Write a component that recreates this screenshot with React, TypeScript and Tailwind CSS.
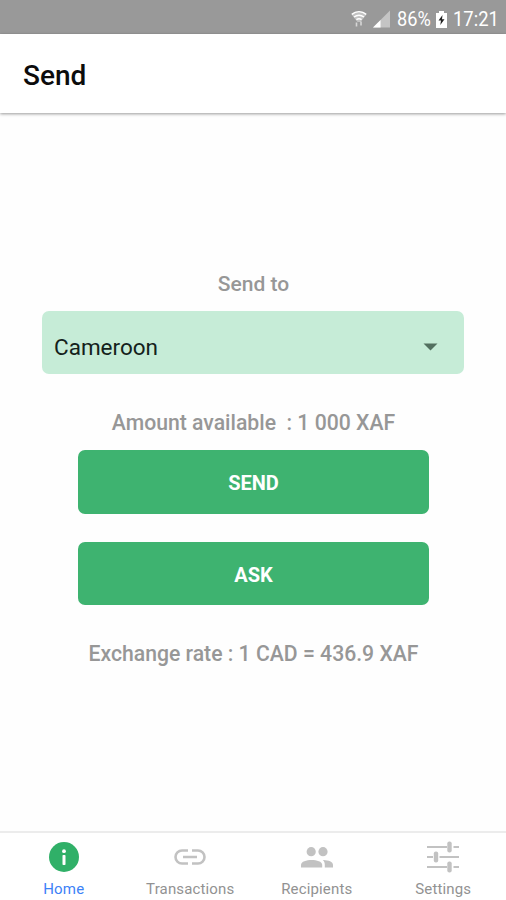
function StatusBar() {
  return (
    <div className="flex h-[34px] items-center justify-end bg-[#999999] pr-[7px] pt-1 text-white">
      <svg width="16" height="18" viewBox="0 0 16 18" fill="none" className="mr-[6px]">
        <path d="M0.5 4.500C4.500 0.200 11.500 0.200 15.500 4.500L9.500 12h-3Z" fill="#fff" fillOpacity="0.4" />
        <path
          d="M0.800 4.400C5 0.700 11 0.700 15.200 4.400M3 7C6 4.800 10 4.800 13 7M5.400 9.600C7 8.500 9 8.500 10.600 9.600"
          stroke="#fff"
          strokeWidth="1.4"
        />
        <path d="M5.500 12.500v4M10 11.500v4" stroke="#fff" strokeOpacity="0.6" strokeWidth="1.6" />
      </svg>
      <svg width="17" height="18" viewBox="0 0 18 18" className="mr-[7px]">
        <path d="M18 0V18H0Z" fill="#c4c4c4" />
        <path d="M8 10V18H0Z" fill="#fff" />
      </svg>
      <span className="w-[35px] whitespace-nowrap text-[20px] leading-none">
        <span className="inline-block origin-left scale-x-[0.91]">86%</span>
      </span>
      <svg width="11" height="17" viewBox="0 0 11 17" className="ml-1 mr-[6px]">
        <path d="M3 0h5v2h3v15H0V2h3Z" fill="#fff" />
        <path d="M6.500 4L2.500 9.500H5L4.300 14L8.500 8.200H6Z" fill="#222" />
      </svg>
      <span className="w-[46px] whitespace-nowrap text-[20px] leading-none">
        <span className="inline-block origin-left scale-x-[0.92]">17:21</span>
      </span>
    </div>
  );
}

function InfoIcon() {
  return (
    <svg width="30" height="30" viewBox="0 0 30 30">
      <circle cx="15" cy="15" r="15" fill="#30b068" />
      <circle cx="15" cy="9.200" r="1.900" fill="#fff" />
      <rect x="13.500" y="13" width="3" height="10" rx="0.800" fill="#fff" />
    </svg>
  );
}

function LinkIcon() {
  return (
    <svg width="32" height="16" viewBox="0 0 32 16" fill="none" stroke="currentColor" strokeWidth="2.600">
      <path d="M14 1.500H8a6.500 6.500 0 0 0 0 13h6M18 1.500h6a6.500 6.500 0 0 1 0 13h-6M9 8h14" />
    </svg>
  );
}

function PeopleIcon() {
  return (
    <svg width="32" height="21" viewBox="0 0 32 21" fill="currentColor">
      <circle cx="10.200" cy="4.700" r="4.600" />
      <circle cx="22" cy="4.700" r="4.600" />
      <path d="M0 20.500v-2.700C0 14.500 5.500 13 10.600 13s10.600 1.500 10.600 4.800v2.700z" />
      <path d="M22.600 13C27.500 13.200 32 14.700 32 17.800v2.700h-8.200v-2.700c0-1.900-.5-3.400-2-4.800z" />
    </svg>
  );
}

function OptionsIcon() {
  return (
    <svg width="32" height="32" viewBox="0 0 32 32" fill="currentColor">
      <path d="M0 5h20v2H0zM26.500 5H32v2h-5.500zM0 15h6v2H0zM12.500 15H32v2H12.500zM0 25h20v2H0zM26.500 25H32v2h-5.500z" />
      <rect x="20.300" y="0.500" width="4.400" height="11" rx="2" />
      <rect x="6.800" y="10.500" width="4.400" height="11" rx="2" />
      <rect x="20.300" y="20.500" width="4.400" height="11" rx="2" />
    </svg>
  );
}

function Tab({ icon, label, active }: any) {
  return (
    <button className="flex flex-1 flex-col items-center pl-px">
      <span className="flex h-[48px] items-center text-[#c2c2c2]">{icon}</span>
      <span
        className={
          active
            ? "text-[15px] leading-4 tracking-[0.15px] text-[#3c82f7]"
            : "text-[15px] leading-4 tracking-[0.15px] text-[#929292]"
        }
      >
        {label}
      </span>
    </button>
  );
}

export default function App() {
  return (
    <div className="flex h-[900px] w-[506px] flex-col overflow-hidden bg-[#fefefe] font-['Roboto',sans-serif]">
      <StatusBar />
      <header className="z-10 flex h-[79px] shrink-0 items-center bg-white pl-[23px] pt-1 shadow-[0_1px_3px_rgba(0,0,0,0.4)]">
        <h1 className="text-[28px] font-medium text-[#0c0c0c]">Send</h1>
      </header>

      <main className="flex flex-1 flex-col items-center pl-px pt-[157px] font-medium text-[#979797]">
        <p className="h-[41px] text-[21px] leading-[28px]">Send to</p>
        <button className="mr-px flex h-[63px] w-[422px] items-center justify-between rounded-[7px] bg-[#c6ecd7] pl-[12px] pr-[26px] pt-2">
          <span className="pt-0.5 text-[22.500px] font-normal text-[#14221b]">Cameroon</span>
          <svg width="15" height="8" viewBox="0 0 15 8" fill="#52705f">
            <path d="M0.500 0.500h14L7.500 7.500z" />
          </svg>
        </button>
        <p className="mt-[35px] h-[41px] whitespace-pre text-[21.200px] leading-[28px]">
          {"Amount available  : 1 000 XAF"}
        </p>
        <button className="h-[64px] w-[351px] rounded-[7px] bg-[#3eb370] pt-[2px] text-[20px] font-bold text-white">
          SEND
        </button>
        <button className="mt-[28px] h-[63px] w-[351px] rounded-[7px] bg-[#3eb370] pt-[2px] text-[20px] font-bold text-white">
          ASK
        </button>
        <p className="mt-[35px] text-[21.200px] leading-[28px]">
          Exchange rate : 1 CAD = 436.9 XAF
        </p>
      </main>

      <nav className="flex h-[69px] shrink-0 border-t-2 border-[#ececec] bg-white">
        <Tab active label="Home" icon={<InfoIcon />} />
        <Tab label="Transactions" icon={<LinkIcon />} />
        <Tab label="Recipients" icon={<PeopleIcon />} />
        <Tab label="Settings" icon={<OptionsIcon />} />
      </nav>
    </div>
  );
}
